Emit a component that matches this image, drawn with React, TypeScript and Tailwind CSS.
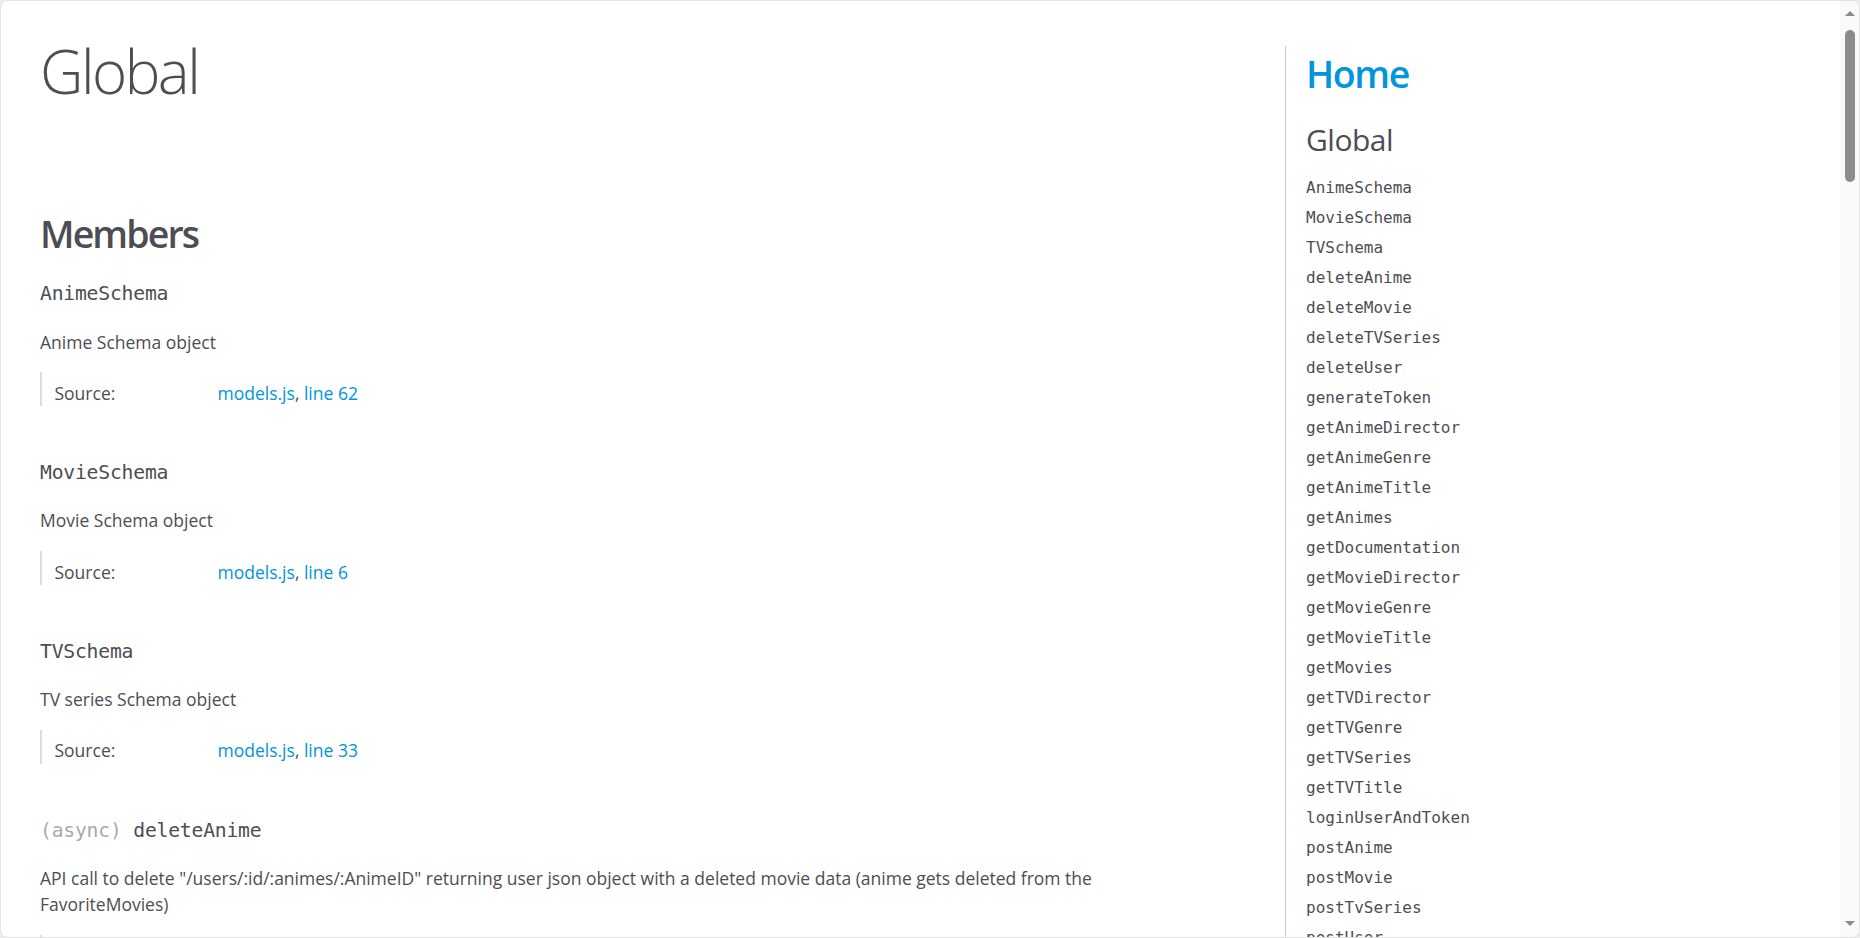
import React from "react";

const sans = { fontFamily: '"Open Sans", "Noto Sans", sans-serif' };
const mono = { fontFamily: '"DejaVu Sans Mono", "Liberation Mono", monospace' };

const members = [
  { name: "AnimeSchema", desc: "Anime Schema object", line: "62" },
  { name: "MovieSchema", desc: "Movie Schema object", line: "6" },
  { name: "TVSchema", desc: "TV series Schema object", line: "33" },
];

const navItems = [
  "AnimeSchema",
  "MovieSchema",
  "TVSchema",
  "deleteAnime",
  "deleteMovie",
  "deleteTVSeries",
  "deleteUser",
  "generateToken",
  "getAnimeDirector",
  "getAnimeGenre",
  "getAnimeTitle",
  "getAnimes",
  "getDocumentation",
  "getMovieDirector",
  "getMovieGenre",
  "getMovieTitle",
  "getMovies",
  "getTVDirector",
  "getTVGenre",
  "getTVSeries",
  "getTVTitle",
  "loginUserAndToken",
  "postAnime",
  "postMovie",
  "postTvSeries",
  "postUser",
];

function Details({ line }: { line: string }) {
  return (
    <div className="mt-[17.5px] mb-[50px] flex border-l-[2px] border-[#ddd] pt-[7.5px] text-[17.5px] leading-[26.25px]">
      <div className="w-[175.5px] shrink-0 pl-[12.5px]">Source:</div>
      <div>
        <a className="text-[#0095dd]" href="#">
          models.js
        </a>
        ,{" "}
        <a className="text-[#0095dd]" href="#">
          line {line}
        </a>
      </div>
    </div>
  );
}

export default function App() {
  return (
    <div className="h-[938px] w-full overflow-hidden bg-[#ececec]" style={sans}>
      <div className="flex h-full w-full overflow-hidden rounded-[8px] border border-[#e4e4e4] bg-white text-[#4d4e53]">
        <div className="flex min-w-0 flex-1 pl-[9px] pt-[10px]">
          {/* main */}
          <div className="w-[1275px] shrink-0">
            <h1 className="ml-[30px] mt-[15px] text-[60px] font-light leading-[90px] tracking-[-2.5px]">
              Global
            </h1>
            <section className="mr-[37.5px] px-[30px]">
              <h3 className="mb-[15px] mt-[90px] text-[37.5px] font-semibold leading-[56.25px] tracking-[-1.9px]">
                Members
              </h3>
              {members.map((m) => (
                <div key={m.name}>
                  <h4 className="text-[19.7px] leading-[33.75px] tracking-[-0.2px]" style={mono}>
                    {m.name}
                  </h4>
                  <div className="mt-[17.5px] text-[17.5px] leading-[26.25px]">{m.desc}</div>
                  <Details line={m.line} />
                </div>
              ))}
              <div>
                <h4 className="text-[19.7px] leading-[33.75px] tracking-[-0.2px]" style={mono}>
                  <span className="text-[#aaa]">(async)</span> deleteAnime
                </h4>
                <div className="mt-[17.5px] text-[17.5px] leading-[26.25px]">
                  API call to delete "/users/:id/:animes/:AnimeID" returning user json object with a deleted movie
                  data (anime gets deleted from the FavoriteMovies)
                </div>
                <div className="mt-[17.5px] h-[34px] border-l-[2px] border-[#ddd]" />
              </div>
            </section>
          </div>
          {/* nav */}
          <nav className="mt-[35px] min-w-0 flex-1 self-start border-l border-[#ccc] pl-[20px]">
            <h2 className="text-[37.5px] font-semibold leading-[56.25px] tracking-[-1.4px]">
              <a href="#" className="text-[#0095dd]">
                Home
              </a>
            </h2>
            <h3 className="mt-[15px] text-[30px] leading-[45px] tracking-[-0.5px]">Global</h3>
            <ul className="mt-[15px]" style={mono}>
              {navItems.map((n) => (
                <li key={n} className="mt-[7.5px] text-[16px] leading-[22.5px] text-[#4d4e53]">
                  {n}
                </li>
              ))}
            </ul>
          </nav>
        </div>
        {/* scrollbar */}
        <div className="flex w-[19px] shrink-0 flex-col items-center bg-[#f9f9f9]">
          <div className="flex h-[24px] items-center justify-center">
            <div className="h-0 w-0 border-x-[5px] border-b-[5px] border-x-transparent border-b-[#8b8b8b]" />
          </div>
          <div className="mt-[5px] h-[152px] w-[10px] rounded-full bg-[#8b8b8b]" />
          <div className="flex-1" />
          <div className="flex h-[24px] items-center justify-center pb-[4px]">
            <div className="h-0 w-0 border-x-[5px] border-t-[5px] border-x-transparent border-t-[#8b8b8b]" />
          </div>
        </div>
      </div>
    </div>
  );
}
